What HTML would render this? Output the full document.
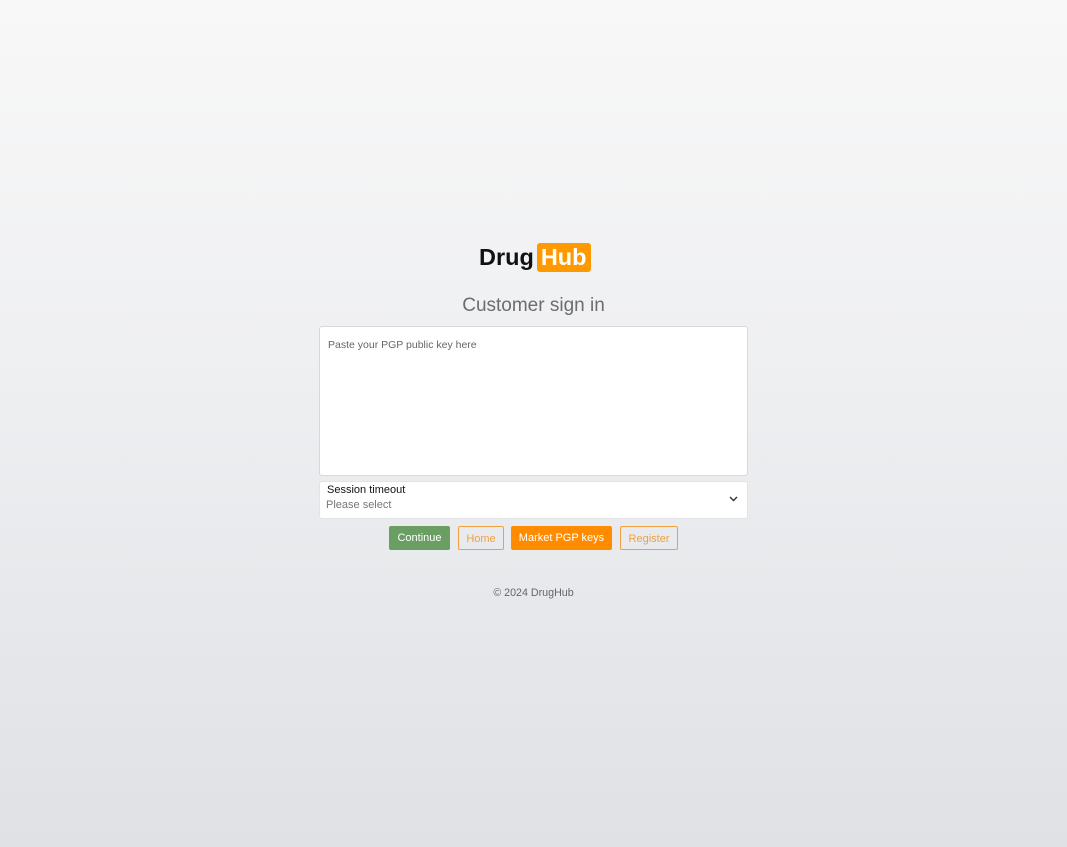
<!DOCTYPE html>
<html><head><meta charset="utf-8"><style>
html,body{margin:0;padding:0}
body{width:1067px;height:847px;background:linear-gradient(180deg,#f8f8f8 0%,#eeeff1 45%,#dfe1e5 100%);font-family:"Liberation Sans",sans-serif;position:relative;overflow:hidden}
.logo{position:absolute;left:479px;top:243px;height:30px;font-weight:bold;font-size:23.5px;line-height:29px;color:#111}
.logo .hub{display:inline-block;background:#ff9900;color:#fff;border-radius:3px;padding:0 4px 0 4px;margin-left:3px;line-height:29px}
.title{position:absolute;left:0;width:1067px;top:295px;text-align:center;font-size:19px;color:#6a6d72}
.ta{position:absolute;left:319px;top:326px;width:427px;height:148px;background:#fff;border:1px solid #d6d8db;border-radius:3px}
.ta span{position:absolute;left:8px;top:12px;font-size:10.5px;color:#666}
.sel{position:absolute;left:319px;top:481px;width:427px;height:36px;background:#fff;border:1px solid #e2e3e5;border-radius:3px}
.sel .l{position:absolute;left:7px;top:2px;font-size:11px;color:#111}
.sel .p{position:absolute;left:6px;top:17px;font-size:11px;color:#777}
.sel svg{position:absolute;right:9px;top:14px}
.btn{position:absolute;top:526px;height:24px;line-height:24px;font-size:11px;text-align:center;box-sizing:border-box;border-radius:2px}
.foot{position:absolute;left:0;width:1067px;top:587px;text-align:center;font-size:10.7px;color:#666}
</style></head><body>
<div class="logo">Drug<span class="hub">Hub</span></div>
<div class="title">Customer sign in</div>
<div class="ta"><span>Paste your PGP public key here</span></div>
<div class="sel"><div class="l">Session timeout</div><div class="p">Please select</div>
<svg width="9" height="6" viewBox="0 0 9 6"><path d="M1 1l3.5 3.5L8 1" stroke="#333" stroke-width="1.4" fill="none"/></svg></div>
<div class="btn" style="left:389px;width:61px;background:#6a9e63;color:#fff">Continue</div>
<div class="btn" style="left:458px;width:46px;border:1px solid #f0a040;color:#f0a040">Home</div>
<div class="btn" style="left:511px;width:101px;background:#ff8c00;color:#fff">Market PGP keys</div>
<div class="btn" style="left:620px;width:58px;border:1px solid #f0a040;color:#f0a040">Register</div>
<div class="foot">© 2024 DrugHub</div>
</body></html>
